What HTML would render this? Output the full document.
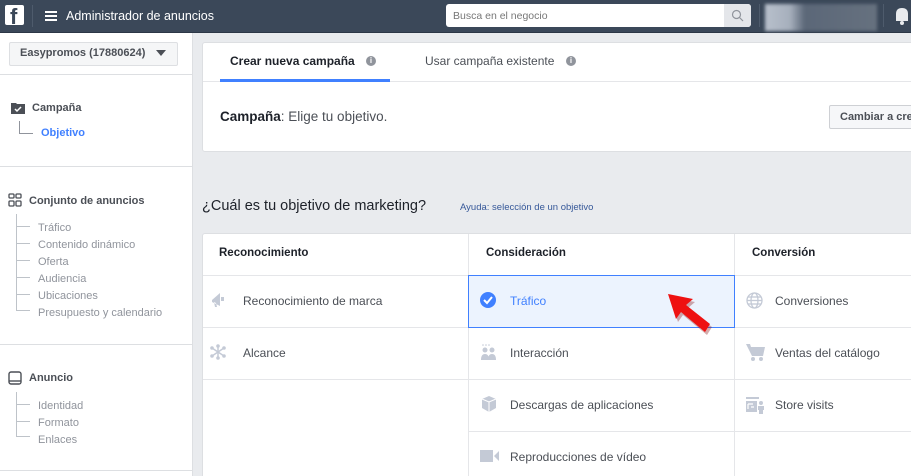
<!DOCTYPE html>
<html><head><meta charset="utf-8"><style>
*{box-sizing:border-box;margin:0;padding:0}
html,body{width:911px;height:476px;overflow:hidden}
body{background:#e9ebee;font-family:"Liberation Sans",Helvetica,Arial,sans-serif;position:relative;color:#1d2129;white-space:nowrap}
.a{position:absolute}
.hdr{left:0;top:0;width:911px;height:33px;background:#3b4859;border-bottom:1px solid #2c3746}
.side{left:0;top:33px;width:192px;height:443px;background:#fff}
.hl{height:1px;background:#dddfe2;left:0;width:192px}
.sb{font-size:11px;font-weight:bold;color:#1d2129}
.sub{font-size:11px;color:#90949c}
.card{background:#fff;border:1px solid #dddfe2;border-radius:3px}
.cell{font-size:12px;color:#4b4f56}
.ic{fill:#c4cad6}
</style></head><body>
<div class="a hdr"></div>
<div class="a" style="left:5px;top:5px;width:19px;height:20px;background:#fff;border-radius:2px"></div>
<div class="a" style="left:10px;top:4px;font-size:22px;font-weight:bold;color:#3b4859;line-height:26px">f</div>
<div class="a" style="left:32px;top:5px;width:1px;height:22px;background:#4e5b6c"></div>
<div class="a" style="left:45px;top:11px;width:12px;height:2px;background:#fff;box-shadow:0 4px 0 #fff,0 8px 0 #fff"></div>
<div class="a" style="left:66px;top:9px;font-size:12.5px;color:#fff">Administrador de anuncios</div>
<div class="a" style="left:446px;top:4px;width:305px;height:23px;background:#fff;border-radius:3px"></div>
<div class="a" style="left:724px;top:4px;width:27px;height:23px;background:#e4e6ea;border-radius:0 3px 3px 0"></div>
<svg class="a" style="left:731px;top:9px" width="13" height="13"><circle cx="5.5" cy="5.5" r="4" fill="none" stroke="#90949c" stroke-width="1.2"/><line x1="8.5" y1="8.5" x2="12" y2="12" stroke="#90949c" stroke-width="1.2"/></svg>
<div class="a" style="left:453px;top:10px;font-size:10.5px;color:#777">Busca en el negocio</div>
<div class="a" style="left:759px;top:4px;width:1px;height:23px;background:#4e5b6c"></div>
<div class="a" style="left:765px;top:4px;width:112px;height:27px;background:linear-gradient(90deg,#b8c0cc 0,#a6afbc 25px,#5b6778 40px,#66717f 100%);filter:blur(1.5px)"></div>
<div class="a" style="left:883px;top:4px;width:1px;height:23px;background:#4e5b6c"></div>
<svg class="a" style="left:893px;top:6px" width="18" height="20"><path d="M3 15 L3 8 Q3 2 9 2 Q15 2 15 8 L15 15 Z" fill="#e9ebee"/><circle cx="9" cy="17" r="2" fill="#e9ebee"/></svg>

<div class="a side"></div>
<div class="a" style="left:192px;top:33px;width:1px;height:443px;background:#dddfe2"></div>
<div class="a" style="left:9px;top:42px;width:169px;height:24px;background:#f5f6f7;border:1px solid #dddfe2;border-radius:2px"></div>
<div class="a sb" style="left:20px;top:47px;color:#4b4f56">Easypromos (17880624)</div>
<svg class="a" style="left:156px;top:50px" width="10" height="7"><path d="M0 0H10L5 6Z" fill="#4b4f56"/></svg>
<div class="a hl" style="top:74px"></div>
<svg class="a" style="left:11px;top:102px" width="14" height="12"><path d="M0 1H5L6 2H14V12H0Z" fill="#4b4f56"/><path d="M4 7L6 9L10 5" stroke="#fff" stroke-width="1.5" fill="none"/></svg>
<div class="a sb" style="left:32px;top:102px;color:#4b4f56">Campaña</div>
<div class="a" style="left:19px;top:121px;width:14px;height:13px;border-left:1px solid #90949c;border-bottom:1px solid #90949c"></div>
<div class="a sb" style="left:41px;top:127px;color:#4080ff">Objetivo</div>
<div class="a hl" style="top:166px"></div>
<svg class="a" style="left:8px;top:193px" width="14" height="14"><g fill="none" stroke="#4b4f56" stroke-width="1.3"><rect x="1" y="1" width="5" height="4" rx="1"/><rect x="8" y="1" width="5" height="4" rx="1"/><rect x="1" y="8" width="5" height="5" rx="1"/><rect x="8" y="8" width="5" height="5" rx="1"/></g></svg>
<div class="a sb" style="left:29px;top:195px;color:#4b4f56">Conjunto de anuncios</div>
<div class="a" style="left:16px;top:214px;width:14px;height:97px;border-left:1px solid #bec3c9;border-bottom:1px solid #bec3c9"></div>
<div class="a sub" style="left:38px;top:220px;line-height:17px">Tráfico<br>Contenido dinámico<br>Oferta<br>Audiencia<br>Ubicaciones<br>Presupuesto y calendario</div>
<div class="a" style="left:16px;top:226px;width:14px;height:1px;background:#bec3c9;box-shadow:0 17px 0 #bec3c9,0 34px 0 #bec3c9,0 51px 0 #bec3c9,0 68px 0 #bec3c9"></div>
<div class="a hl" style="top:344px"></div>
<svg class="a" style="left:8px;top:371px" width="14" height="15"><rect x="1" y="1" width="12" height="12" rx="2" fill="none" stroke="#4b4f56" stroke-width="1.4"/><line x1="1" y1="10" x2="13" y2="10" stroke="#4b4f56" stroke-width="1.4"/></svg>
<div class="a sb" style="left:29px;top:372px;color:#4b4f56">Anuncio</div>
<div class="a" style="left:16px;top:392px;width:14px;height:45px;border-left:1px solid #bec3c9;border-bottom:1px solid #bec3c9"></div>
<div class="a sub" style="left:38px;top:398px;line-height:17px">Identidad<br>Formato<br>Enlaces</div>
<div class="a" style="left:16px;top:404px;width:14px;height:1px;background:#bec3c9;box-shadow:0 17px 0 #bec3c9"></div>
<div class="a hl" style="top:470px"></div>

<div class="a card" style="left:202px;top:42px;width:720px;height:110px"></div>
<div class="a" style="left:203px;top:81px;width:708px;height:1px;background:#e5e6e9"></div>
<div class="a" style="left:220px;top:79px;width:170px;height:3px;background:#4080ff"></div>
<div class="a" style="left:230px;top:54px;font-size:12px;font-weight:bold;color:#1d2129">Crear nueva campaña</div>
<div class="a" style="left:366px;top:56px;width:10px;height:10px;border-radius:50%;background:#90949c;color:#fff;font-size:8px;font-weight:bold;text-align:center;line-height:10px">i</div>
<div class="a" style="left:425px;top:54px;font-size:12px;color:#4b4f56">Usar campaña existente</div>
<div class="a" style="left:566px;top:56px;width:10px;height:10px;border-radius:50%;background:#90949c;color:#fff;font-size:8px;font-weight:bold;text-align:center;line-height:10px">i</div>
<div class="a" style="left:220px;top:109px;font-size:13.5px;color:#4b4f56"><b style="color:#1d2129">Campaña</b>: Elige tu objetivo.</div>
<div class="a" style="left:829px;top:105px;width:100px;height:24px;background:#f6f7f9;border:1px solid #ced0d4;border-radius:2px"></div>
<div class="a" style="left:840px;top:111px;font-size:11px;font-weight:bold;color:#4b4f56">Cambiar a cre</div>

<div class="a" style="left:202px;top:198px;font-size:14.5px;color:#1d2129">¿Cuál es tu objetivo de marketing?</div>
<div class="a" style="left:460px;top:202px;font-size:9.5px;color:#365899">Ayuda: selección de un objetivo</div>

<div class="a card" style="left:202px;top:233px;width:720px;height:260px"></div>
<div class="a" style="left:468px;top:234px;width:1px;height:242px;background:#e5e6e9"></div>
<div class="a" style="left:734px;top:234px;width:1px;height:242px;background:#e5e6e9"></div>
<div class="a" style="left:203px;top:275px;width:708px;height:1px;background:#e5e6e9"></div>
<div class="a" style="left:203px;top:327px;width:708px;height:1px;background:#e5e6e9"></div>
<div class="a" style="left:203px;top:379px;width:708px;height:1px;background:#e5e6e9"></div>
<div class="a" style="left:468px;top:431px;width:443px;height:1px;background:#e5e6e9"></div>
<div class="a" style="left:468px;top:275px;width:267px;height:53px;background:#ecf3fe;border:1px solid #4080ff"></div>

<div class="a" style="left:219px;top:247px;font-size:11.5px;font-weight:bold;color:#1d2129">Reconocimiento</div>
<div class="a" style="left:486px;top:247px;font-size:11.5px;font-weight:bold;color:#1d2129">Consideración</div>
<div class="a" style="left:752px;top:247px;font-size:11.5px;font-weight:bold;color:#1d2129">Conversión</div>

<svg class="a" style="left:210px;top:292px" width="16" height="16"><path class="ic" d="M2 8L10 1V14L2 10Z M4 10L5 15H7L6 11Z M11 5H14V9H11Z"/></svg>
<div class="a cell" style="left:243px;top:294px">Reconocimiento de marca</div>
<svg class="a" style="left:210px;top:344px" width="16" height="16"><g stroke="#c4cad6" stroke-width="1.5"><line x1="8" y1="1" x2="8" y2="15"/><line x1="2" y1="4" x2="14" y2="12"/><line x1="2" y1="12" x2="14" y2="4"/></g><g class="ic"><circle cx="8" cy="2" r="1.8"/><circle cx="8" cy="14" r="1.8"/><circle cx="2" cy="4" r="1.8"/><circle cx="14" cy="12" r="1.8"/><circle cx="2" cy="12" r="1.8"/><circle cx="14" cy="4" r="1.8"/></g></svg>
<div class="a cell" style="left:243px;top:346px">Alcance</div>

<svg class="a" style="left:479px;top:291px" width="18" height="18"><circle cx="9" cy="9" r="8" fill="#4080ff"/><path d="M5 9L8 12L13 6" stroke="#fff" stroke-width="2" fill="none"/></svg>
<div class="a cell" style="left:510px;top:294px;color:#4080ff">Tráfico</div>
<svg class="a" style="left:480px;top:344px" width="18" height="18"><g class="ic"><circle cx="5" cy="6" r="2.5"/><circle cx="12" cy="6" r="2.5"/><path d="M1 16Q1 10 5 10Q9 10 9 16Z M8 16Q8 10 12 10Q16 10 16 16Z"/><circle cx="3" cy="1" r=".8"/><circle cx="6" cy="1" r=".8"/><circle cx="9" cy="1" r=".8"/></g></svg>
<div class="a cell" style="left:510px;top:346px">Interacción</div>
<svg class="a" style="left:480px;top:395px" width="18" height="18"><path class="ic" d="M9 1L16 4V13L9 17L2 13V4Z"/><path d="M2 4L9 7L16 4M9 7V17" stroke="#fff" stroke-width="1" fill="none"/></svg>
<div class="a cell" style="left:510px;top:398px">Descargas de aplicaciones</div>
<svg class="a" style="left:480px;top:449px" width="20" height="14"><path class="ic" d="M0 1H13V13H0Z M14 7L19 2V12Z"/></svg>
<div class="a cell" style="left:510px;top:450px">Reproducciones de vídeo</div>

<svg class="a" style="left:746px;top:292px" width="17" height="17"><g fill="none" stroke="#c4cad6" stroke-width="1.3"><circle cx="8.5" cy="8.5" r="7.5"/><ellipse cx="8.5" cy="8.5" rx="3.5" ry="7.5"/><line x1="1" y1="8.5" x2="16" y2="8.5"/><line x1="2" y1="5" x2="15" y2="5"/><line x1="2" y1="12" x2="15" y2="12"/></g></svg>
<div class="a cell" style="left:775px;top:294px">Conversiones</div>
<svg class="a" style="left:746px;top:343px" width="20" height="19"><path class="ic" d="M0 1H4L5 4H19L17 13H6Z"/><circle cx="7" cy="16" r="2" class="ic"/><circle cx="15" cy="16" r="2" class="ic"/></svg>
<div class="a cell" style="left:775px;top:346px">Ventas del catálogo</div>
<svg class="a" style="left:745px;top:396px" width="20" height="18"><path class="ic" d="M1 1H14V3H1Z M1 5H12V16H1Z"/><path d="M3 8H8M3 8V13M6 11H9" stroke="#fff" stroke-width="1.2"/><circle cx="16" cy="7" r="2" class="ic"/><path class="ic" d="M13 10H19V14H18V18H14V14H13Z"/></svg>
<div class="a cell" style="left:775px;top:398px">Store visits</div>

<svg class="a" style="left:665px;top:290px" width="60" height="50"><path d="M3 4L28 9L21 15L45 34L40 42L16 22L11 29Z" fill="#8a1010" opacity=".35" transform="translate(2,3)"/><path d="M3 4L28 9L21 15L45 34L40 42L16 22L11 29Z" fill="#ee1111"/></svg>
</body></html>
